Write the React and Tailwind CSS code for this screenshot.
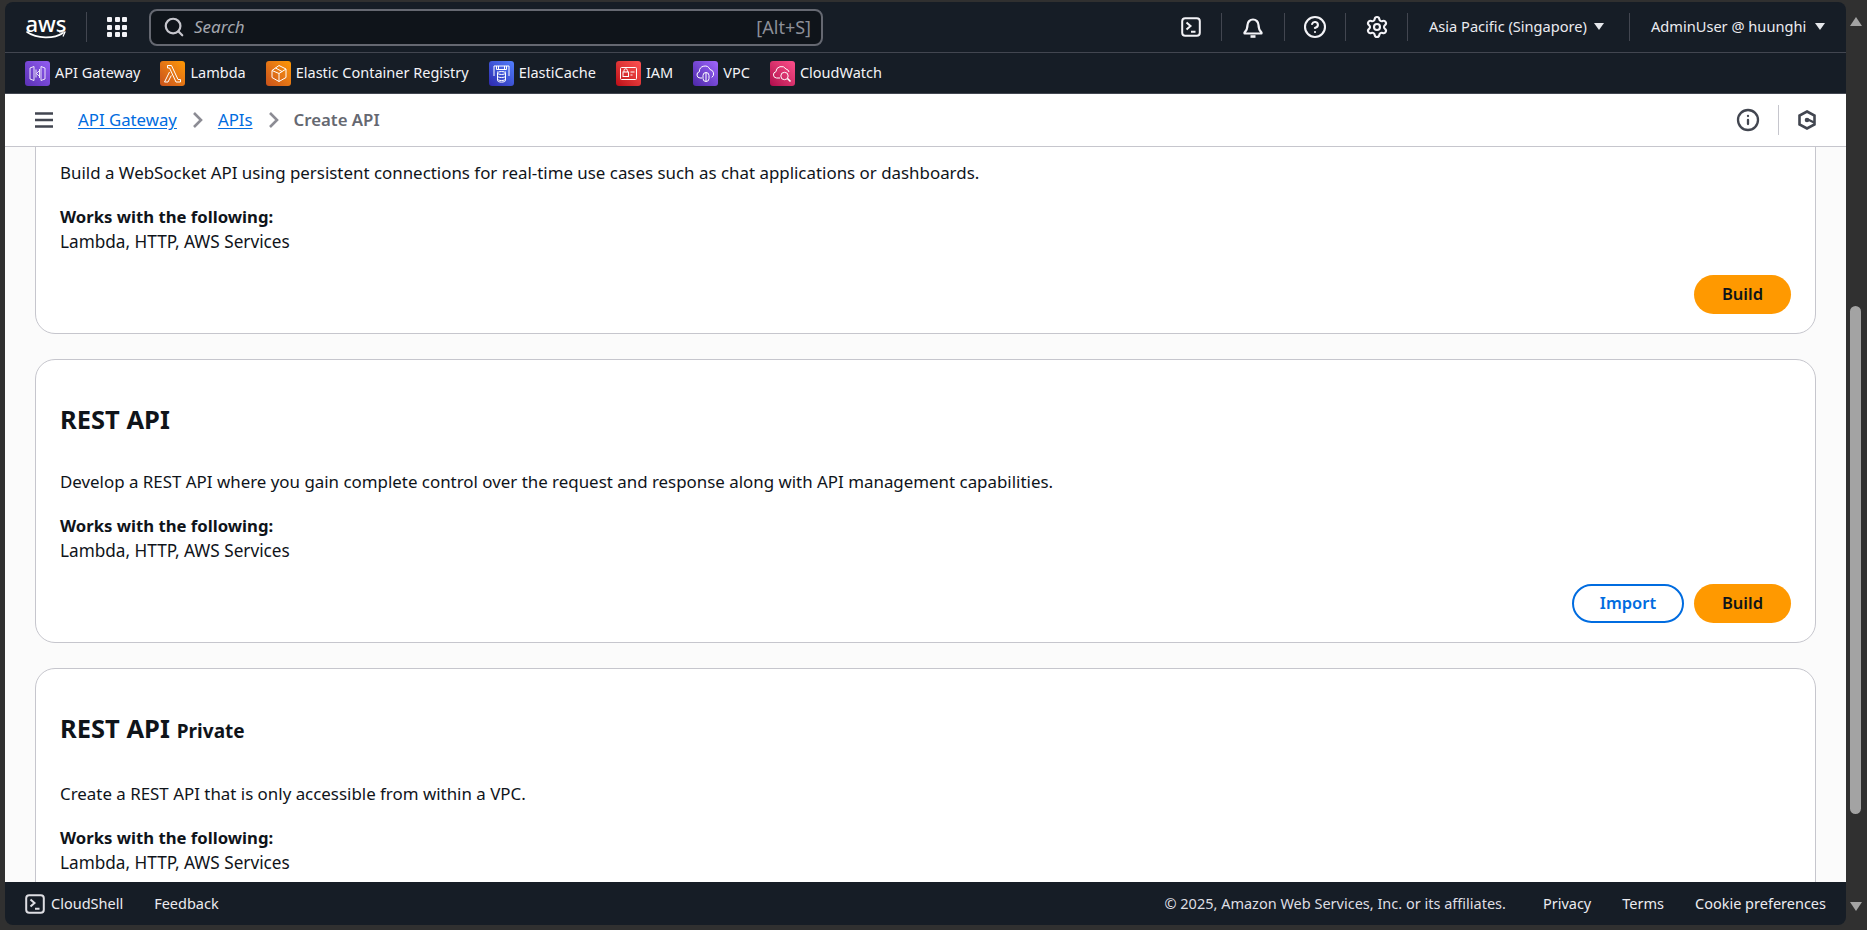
import { Search, CircleHelp, Settings, Info } from "lucide-react";

const FONT = "font-['Noto_Sans','Liberation_Sans',sans-serif]";

function TerminalIcon({ className }) {
  return (
    <svg viewBox="0 0 20 20" fill="none" stroke="currentColor" strokeWidth="2" className={className}>
      <rect x="1.2" y="1.2" width="17.6" height="17.6" rx="3" />
      <path d="M5.5 5.5 9.5 9l-4 3.5M10 14.7h4.5" />
    </svg>
  );
}

function BellIcon({ className }) {
  return (
    <svg viewBox="0 0 20 22" fill="none" stroke="currentColor" strokeWidth="2.2" strokeLinejoin="round" className={className}>
      <path d="M4.5 9a5.5 5.5 0 0 1 11 0c0 4 1 5.5 3 7.5v1h-17v-1c2-2 3-3.5 3-7.5z" />
      <path d="M7.5 20.5h5" strokeWidth="2.6" />
    </svg>
  );
}

function ServiceGlyph({ name }) {
  const props = { viewBox: "0 0 25 25", fill: "none", stroke: "white", strokeWidth: 1, className: "w-[25px] h-[25px]" };
  if (name === "api") {
    return (
      <svg {...props} strokeOpacity="0.85">
        <path d="M5 7 9 5.5v14L5 18zM20 7l-4-1.5v14l4-1.5z" />
        <path d="M14.5 9.5 11.5 12.5l3 3M11 8.5v8M14.5 8v9" />
      </svg>
    );
  }
  if (name === "lambda") {
    return (
      <svg {...props}>
        <path d="M7.5 4.5h4l6.5 14h2.5V21H16L9.5 7H7.5zM9.5 11 4.5 21h3.5l3.3-6.5" />
      </svg>
    );
  }
  if (name === "ecr") {
    return (
      <svg {...props}>
        <path d="M13 4.5 20 8v8.5l-7 4-7-4V9.5zM13 12.5v8M13 12.5l7-4.5M6 9.5l7 3M9.5 7l6.5 3.5" />
      </svg>
    );
  }
  if (name === "cache") {
    return (
      <svg {...props}>
        <path d="M5 15V5h15v10M7.5 5v3.5h10V5M9.5 5v3.5M15.5 5v3.5M8 11h1M16 11h1" />
        <ellipse cx="12.5" cy="12" rx="4" ry="1.5" />
        <path d="M8.5 12v7.5c0 1 1.8 1.6 4 1.6s4-.6 4-1.6V12M8.5 15c0 1 1.8 1.5 4 1.5s4-.5 4-1.5M8.5 18c0 1 1.8 1.5 4 1.5s4-.5 4-1.5" />
      </svg>
    );
  }
  if (name === "iam") {
    return (
      <svg {...props}>
        <rect x="4.5" y="6.5" width="16" height="12" rx="1" />
        <rect x="7" y="11" width="5.5" height="4.5" />
        <path d="M8 11V9.5a1.7 1.7 0 0 1 3.4 0V11M14.5 11h4M14.5 14h2" />
      </svg>
    );
  }
  if (name === "vpc") {
    return (
      <svg {...props}>
        <path d="M9 17H7a3.2 3.2 0 0 1-.6-6.3A5.5 5.5 0 0 1 17 8.5a4.4 4.4 0 0 1 1.8 7.9" />
        <rect x="10" y="11.5" width="6" height="9" rx="3" />
        <path d="M13 11.5v9" />
      </svg>
    );
  }
  return (
    <svg {...props}>
      <path d="M10 17H6.5a3.2 3.2 0 0 1-.6-6.3A5.5 5.5 0 0 1 16 8a4 4 0 0 1 3 3" />
      <circle cx="14.5" cy="15" r="3.7" />
      <path d="m17.5 17.5 3 3" strokeWidth="1.6" />
    </svg>
  );
}

const SHORTCUTS = [
  { name: "api", label: "API Gateway", bg: "bg-gradient-to-tr from-[#5a30b5] to-[#945df2]" },
  { name: "lambda", label: "Lambda", bg: "bg-gradient-to-tr from-[#c8511b] to-[#ff9900]" },
  { name: "ecr", label: "Elastic Container Registry", bg: "bg-gradient-to-tr from-[#c8511b] to-[#ff9900]" },
  { name: "cache", label: "ElastiCache", bg: "bg-gradient-to-tr from-[#2e27ad] to-[#527fff]" },
  { name: "iam", label: "IAM", bg: "bg-gradient-to-tr from-[#bd0816] to-[#ff5252]" },
  { name: "vpc", label: "VPC", bg: "bg-gradient-to-tr from-[#4d27a8] to-[#a166ff]" },
  { name: "cw", label: "CloudWatch", bg: "bg-gradient-to-tr from-[#b0084d] to-[#ff4f8b]" },
];

function NavDivider() {
  return <div className="w-px h-[28px] bg-[#424650]" />;
}

function Caret() {
  return <span className="w-0 h-0 border-x-[5px] border-x-transparent border-t-[7px] border-t-[#e5e7eb]" />;
}

function TopNav() {
  return (
    <div className="h-[51px] shrink-0 border-b border-[#424650] flex items-center pl-[21px] text-[#ebebf0]">
      <div className="relative w-[40px] h-[26px] flex flex-col items-center">
        <span className="text-[22px] leading-[18px] font-medium text-white">aws</span>
        <svg viewBox="0 0 40 8" fill="none" className="absolute left-0 top-[17px] w-[40px] h-[8px]">
          <path d="M1 1c10 7 27 7 36 1" stroke="white" strokeWidth="1.6" strokeLinecap="round" />
          <path d="M33 1h6l-2 4.5" stroke="white" strokeWidth="1.2" />
        </svg>
      </div>
      <div className="w-px h-[30px] bg-[#424650] ml-[20px]" />
      <div className="grid grid-cols-3 gap-[2.5px] w-[20px] ml-[20px]">
        {Array.from({ length: 9 }).map((_, i) => (
          <span key={i} className="h-[5px] w-[5px] rounded-[1px] bg-[#f3f3f7]" />
        ))}
      </div>
      <div className="ml-[22px] w-[674px] h-[37px] rounded-[8px] border-2 border-[#656871] bg-[#0f141a] flex items-center pl-[12px] pr-[10px]">
        <Search size={22} strokeWidth={2.4} className="text-[#c6c6cd]" />
        <span className="ml-[9px] italic text-[17px] text-[#a4a7af]">Search</span>
        <span className="ml-auto text-[18px] text-[#8c8f98]">[Alt+S]</span>
      </div>
      <div className="flex items-center ml-[338px]">
        <div className="w-[60px] flex justify-center"><TerminalIcon className="w-[20px] h-[20px] text-[#f3f3f7]" /></div>
        <NavDivider />
        <div className="w-[62px] flex justify-center"><BellIcon className="w-[20px] h-[22px] text-[#f3f3f7]" /></div>
        <NavDivider />
        <div className="w-[60px] flex justify-center"><CircleHelp size={24} strokeWidth={2.1} className="text-[#f3f3f7]" /></div>
        <NavDivider />
        <div className="w-[61px] flex justify-center"><Settings size={24} strokeWidth={2.1} className="text-[#f3f3f7]" /></div>
        <NavDivider />
        <div className="w-[221px] flex items-center pl-[21px] gap-[7px] text-[14.6px]">
          <span>Asia Pacific (Singapore)</span>
          <Caret />
        </div>
        <NavDivider />
        <div className="flex items-center pl-[21px] gap-[9px] text-[14.6px]">
          <span>AdminUser @ huunghi</span>
          <Caret />
        </div>
      </div>
    </div>
  );
}

function ShortcutBar() {
  return (
    <div className="h-[41px] shrink-0 flex items-center pl-[20px] gap-[20px] text-[14.5px] text-[#f3f3f7] border-b border-[#424650]">
      {SHORTCUTS.map((s) => (
        <div key={s.label} className="flex items-center gap-[5px]">
          <span className={`w-[25px] h-[25px] rounded-[3px] ${s.bg}`}>
            <ServiceGlyph name={s.name} />
          </span>
          <span>{s.label}</span>
        </div>
      ))}
    </div>
  );
}

function Crumb() {
  return (
    <svg viewBox="0 0 11 18" fill="none" stroke="#8c8c94" strokeWidth="2.6" className="w-[11px] h-[18px] mx-[15px]">
      <path d="M2 2l7 7-7 7" />
    </svg>
  );
}

function Breadcrumbs() {
  return (
    <div className="h-[53px] shrink-0 bg-white border-b border-[#c6c6cd] flex items-center pl-[30px] pr-[30px] text-[16.8px]">
      <svg viewBox="0 0 18 16" fill="none" stroke="#424650" strokeWidth="2.6" className="w-[18px] h-[16px]">
        <path d="M0 1.5h18M0 8h18M0 14.5h18" />
      </svg>
      <a className="ml-[25px] text-[#006ce0] underline underline-offset-2">API Gateway</a>
      <Crumb />
      <a className="text-[#006ce0] underline underline-offset-2">APIs</a>
      <Crumb />
      <span className="font-semibold text-[#656871]">Create API</span>
      <div className="ml-auto flex items-center">
        <Info size={24} strokeWidth={2.3} className="text-[#424650]" />
        <div className="w-px h-[30px] bg-[#c6c6cd] ml-[18px] mr-[19px]" />
        <svg viewBox="0 0 18 20" fill="none" stroke="#424650" strokeWidth="2.6" className="w-[18px] h-[20px]">
          <path d="M9 1.5 16.5 5.5v9L9 18.5 1.5 14.5v-9z" />
          <circle cx="9" cy="10" r="1.6" fill="#424650" strokeWidth="1.4" />
          <path d="m10 9.5 6 3" strokeWidth="2.2" />
        </svg>
      </div>
    </div>
  );
}

function ApiCard({ title, badge, description, showImport, className }) {
  return (
    <div className={`h-[284px] shrink-0 rounded-[20px] border border-[#c6c6cd] bg-white pt-[44px] pl-[24px] pr-[24px] text-[#0f141a] ${className || ""}`}>
      <h2 className="text-[25.5px] leading-[30px] font-bold">
        {title}
        {badge && <span className="ml-[7px] text-[19px] font-bold">{badge}</span>}
      </h2>
      <p className="mt-[36px] text-[16.9px] leading-[24px]">{description}</p>
      <p className="mt-[20px] text-[16.7px] leading-[24px] font-bold">Works with the following:</p>
      <p className="mt-[1px] text-[17.2px] leading-[24px]">Lambda, HTTP, AWS Services</p>
      <div className="mt-[21px] flex justify-end gap-[10px]">
        {showImport && (
          <button className="w-[112px] h-[39px] rounded-full border-2 border-[#006ce0] text-[#006ce0] text-[16.5px] font-semibold">Import</button>
        )}
        <button className="w-[97px] h-[39px] rounded-full bg-[#ff9900] text-[#0f141a] text-[16.5px] font-semibold">Build</button>
      </div>
    </div>
  );
}

function Footer() {
  return (
    <div className="h-[43px] shrink-0 bg-[#161d26] flex items-center pl-[20px] pr-[20px] text-[14.5px] text-[#ebebf0] rounded-b-[8px]">
      <TerminalIcon className="w-[20px] h-[20px] text-[#dedee3]" />
      <span className="ml-[6px]">CloudShell</span>
      <span className="ml-[31px]">Feedback</span>
      <span className="ml-auto text-[#dedee3]">© 2025, Amazon Web Services, Inc. or its affiliates.</span>
      <span className="ml-[37px]">Privacy</span>
      <span className="ml-[31px]">Terms</span>
      <span className="ml-[31px]">Cookie preferences</span>
    </div>
  );
}

function Scrollbar() {
  return (
    <div className="w-[21px] shrink-0 flex flex-col items-start pl-[4px]">
      <span className="mt-[15px] w-0 h-0 border-x-[6px] border-x-transparent border-b-[9px] border-b-[#a3a3a3]" />
      <div className="mt-[280px] w-[11px] h-[508px] rounded-full bg-[#a3a3a3]" />
      <span className="mt-[88px] w-0 h-0 border-x-[6px] border-x-transparent border-t-[9px] border-t-[#a3a3a3]" />
    </div>
  );
}

export default function App() {
  return (
    <div className={`w-[1867px] h-[930px] overflow-hidden bg-[#303030] pt-[2px] pb-[5px] pl-[5px] flex ${FONT}`}>
      <div className="flex-1 min-w-0 flex flex-col">
        <div className="bg-[#161d26] rounded-t-[8px]">
          <TopNav />
          <ShortcutBar />
        </div>
        <Breadcrumbs />
        <div className="flex-1 min-h-0 overflow-hidden bg-[#fbfbfb] pl-[30px] pr-[30px] flex flex-col gap-[25px]">
          <ApiCard
            className="-mt-[97px]"
            title="WebSocket API"
            description="Build a WebSocket API using persistent connections for real-time use cases such as chat applications or dashboards."
          />
          <ApiCard
            title="REST API"
            showImport
            description="Develop a REST API where you gain complete control over the request and response along with API management capabilities."
          />
          <ApiCard
            title="REST API"
            badge="Private"
            description="Create a REST API that is only accessible from within a VPC."
          />
        </div>
        <Footer />
      </div>
      <Scrollbar />
    </div>
  );
}
